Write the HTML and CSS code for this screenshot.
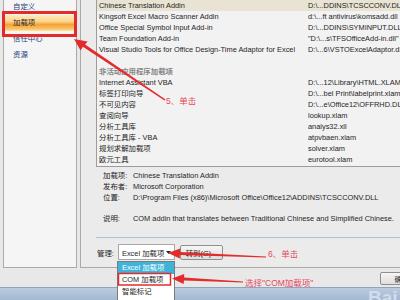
FILE: index.html
```html
<!DOCTYPE html>
<html lang="zh-CN">
<head>
<meta charset="utf-8">
<title>加载项</title>
<link rel="stylesheet" href="styles.css">
</head>
<body>
<div class="dialog">
  <div class="main">
    <nav class="sidebar">
      <div class="nav-item">自定义</div>
      <div class="nav-item active">加载项</div>
      <div class="nav-item">信任中心</div>
      <div class="nav-item">资源</div>
    </nav>
    <section class="content">
      <div class="listbox">
        <div class="row selected"><span>Chinese Translation Addin</span><span>D:\...DDINS\TCSCCONV.DLL</span></div>
        <div class="row"><span>Kingsoft Excel Macro Scanner Addin</span><span>d:\...ft antivirus\komsadd.dll</span></div>
        <div class="row"><span>Office Special Symbol Input Add-in</span><span>D:\...DDINS\SYMINPUT.DLL</span></div>
        <div class="row"><span>Team Foundation Add-in</span><span>"D:\...s\TFSOfficeAdd-in.dll"</span></div>
        <div class="row"><span>Visual Studio Tools for Office Design-Time Adaptor for Excel</span><span>D:\...6\VSTOExcelAdaptor.dll</span></div>
        <div class="row"><span></span><span></span></div>
        <div class="row group"><span>非活动应用程序加载项</span><span></span></div>
        <div class="row"><span>Internet Assistant VBA</span><span>D:\...12\Library\HTML.XLAM</span></div>
        <div class="row"><span>标签打印向导</span><span>D:\...bel Print\labelprint.xlam</span></div>
        <div class="row"><span>不可见内容</span><span>D:\...e\Office12\OFFRHD.DLL</span></div>
        <div class="row"><span>查阅向导</span><span>lookup.xlam</span></div>
        <div class="row"><span>分析工具库</span><span>analys32.xll</span></div>
        <div class="row"><span>分析工具库 - VBA</span><span>atpvbaen.xlam</span></div>
        <div class="row"><span>规划求解加载项</span><span>solver.xlam</span></div>
        <div class="row"><span>欧元工具</span><span>eurotool.xlam</span></div>
      </div>
      <div class="details">
        <div class="drow"><span class="dl">加载项:</span><span>Chinese Translation Addin</span></div>
        <div class="drow"><span class="dl">发布者:</span><span>Microsoft Corporation</span></div>
        <div class="drow"><span class="dl">位置:</span><span>D:\Program Files (x86)\Microsoft Office\Office12\ADDINS\TCSCCONV.DLL</span></div>
        <div class="drow blank"></div>
        <div class="drow"><span class="dl">说明:</span><span>COM addin that translates between Traditional Chinese and Simplified Chinese.</span></div>
      </div>
      <div class="separator"></div>
      <div class="manage">
        <span class="manage-label">管理:</span>
        <div class="combo"><span>Excel 加载项</span><svg class="caret" width="5" height="3" viewBox="0 0 5 3"><path d="M0 0H5L2.5 3Z" fill="#222"/></svg></div>
        <div class="btn go">转到(G)...</div>
      </div>
    </section>
  </div>
  <div class="footer">
    <div class="btn ok">确定</div>
  </div>
  <div class="taskbar"><span class="wm">Bai</span></div>
</div>

<div class="dropdown">
  <div class="opt hl">Excel 加载项</div>
  <div class="opt">COM 加载项</div>
  <div class="opt">智能标记</div>
</div>

<svg class="annot" width="400" height="300" viewBox="0 0 400 300">
  <rect x="3.5" y="12.5" width="72" height="23" fill="none" stroke="#e42b2b" stroke-width="3"/>
  <rect x="118.5" y="273.5" width="52" height="11.5" fill="none" stroke="#e42b2b" stroke-width="1.5"/>
  <polygon fill="#e42b2b" points="74,39 87.6,41.4 85.1,44.6 165.5,99.4 164.5,100.6 82.9,46.8 80.6,50.6"/>
  <polygon fill="#e42b2b" points="168,253 180.2,248.5 180.1,252 266,256.4 266,257.6 179.9,255 179.8,258.5"/>
  <polygon fill="#e42b2b" points="172,278.5 184.2,274.1 184.1,277.6 243,281.4 243,282.6 183.9,280.6 183.7,284.1"/>
</svg>
<span class="note n5">5、单击</span>
<span class="note n6">6、单击</span>
<span class="note n7">选择"COM加载项"</span>
</body>
</html>
```

FILE: styles.css
```css
* { box-sizing: border-box; }
html, body { margin: 0; padding: 0; }
body {
  width: 400px;
  height: 300px;
  overflow: hidden;
  position: relative;
  background: #e8e8e8;
  font-family: "Liberation Sans", "Noto Sans CJK SC", sans-serif;
  font-size: 7.4px;
  color: #1e1e1e;
}
.dialog { display: flex; flex-direction: column; height: 300px; }
.main { display: flex; height: 268px; gap: 3px; padding-left: 3px; flex: none; }
.sidebar {
  width: 74px;
  flex: none;
  background: #f5f5f5;
  border: 1px solid #a9a9a9;
  border-top: none;
  display: flex;
  flex-direction: column;
}
.nav-item { height: 16px; line-height: 16px; padding-left: 9px; color: #23407a; white-space: nowrap; }
.nav-item:first-child { margin-top: -1px; }
.nav-item.active {
  background: linear-gradient(#fdebbd 0%, #fbd48a 40%, #f4a23a 60%, #f8c060 85%, #fde6a4 100%);
  color: #2a2a2a;
}
.content {
  flex: 1;
  min-width: 0;
  background: #ebebeb;
  border-left: 1px solid #a9a9a9;
  border-bottom: 1px solid #a9a9a9;
  padding-left: 15px;
  display: flex;
  flex-direction: column;
}
.listbox {
  height: 167px;
  flex: none;
  background: #f2f2f2;
  border-left: 1px solid #9c9c9c;
  border-bottom: 1px solid #9c9c9c;
  overflow: hidden;
}
.row {
  display: grid;
  grid-template-columns: 209px auto;
  height: 11px;
  line-height: 11px;
  padding-left: 2px;
  white-space: nowrap;
  overflow: hidden;
}
.row.selected { background: #e8e3d3; }
.row.group { color: #858585; font-weight: bold; }
.details { margin-top: 3px; padding-left: 7px; }
.drow { display: flex; height: 11px; line-height: 11px; white-space: nowrap; }
.drow.blank { height: 10px; }
.dl { width: 30px; flex: none; }
.separator { height: 1px; background: #b3c0cf; margin-top: 13px; flex: none; }
.manage { display: flex; align-items: center; height: 16px; margin-top: 6px; padding-left: 1px; }
.manage-label { width: 21px; flex: none; }
.combo {
  width: 57px;
  height: 16px;
  background: #ffffff;
  border: 1px solid #a8a8a8;
  display: flex;
  align-items: center;
  justify-content: space-between;
  padding: 0 3px 0 3px;
  white-space: nowrap;
}
.btn {
  height: 15px;
  border: 1px solid #8f8f8f;
  border-radius: 2px;
  background: linear-gradient(#f6f6f6, #dedede);
  display: flex;
  align-items: center;
  justify-content: center;
  white-space: nowrap;
}
.go { width: 43px; margin-left: 5px; }
.footer { height: 19px; flex: none; display: flex; justify-content: flex-end; padding-top: 4px; overflow: hidden; }
.ok { width: 44px; height: 13px; margin-right: -24px; }
.taskbar {
  flex: 1;
  background: linear-gradient(#bccbdf, #a3b8d3);
  border-top: 1px solid #8fa3bd;
  position: relative;
  overflow: hidden;
}
.wm {
  position: absolute;
  left: 368px;
  top: 0px;
  font-size: 19px;
  font-weight: bold;
  color: #d3dceb;
  line-height: 19px;
}
.dropdown {
  position: absolute;
  left: 117px;
  top: 261px;
  width: 58px;
  height: 42px;
  background: #ffffff;
  border: 1px solid #7c7c7c;
}
.opt { height: 12px; line-height: 12px; padding-left: 4px; white-space: nowrap; }
.opt.hl { background: #3fb3da; color: #ffffff; }
.annot { position: absolute; left: 0; top: 0; pointer-events: none; }
.note {
  position: absolute;
  font-size: 8.5px;
  line-height: 10px;
  color: #e8475a;
  white-space: nowrap;
}
.n5 { left: 166px; top: 96px; }
.n6 { left: 268px; top: 249px; }
.n7 { left: 245px; top: 278px; }
```
